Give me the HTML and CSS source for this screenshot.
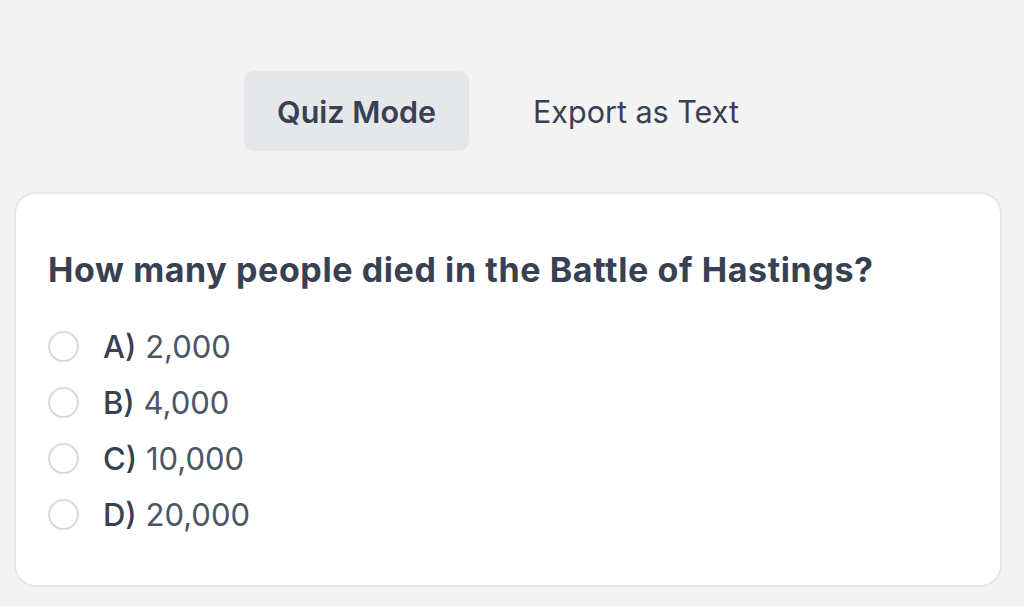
FILE: index.html
```html
<!DOCTYPE html>
<html>
<head>
<meta charset="utf-8">
<link rel="stylesheet" href="styles.css">
</head>
<body>
<div class="page">
  <nav class="tabs">
    <button class="tab active">Quiz Mode</button>
    <button class="tab">Export as Text</button>
  </nav>
  <section class="card">
    <h2 class="question">How many people died in the Battle of Hastings?</h2>
    <ul class="options">
      <li class="option"><span class="radio"></span><span class="label"><span class="key">A)</span> 2,000</span></li>
      <li class="option"><span class="radio"></span><span class="label"><span class="key">B)</span> 4,000</span></li>
      <li class="option"><span class="radio"></span><span class="label"><span class="key">C)</span> 10,000</span></li>
      <li class="option"><span class="radio"></span><span class="label"><span class="key">D)</span> 20,000</span></li>
    </ul>
  </section>
</div>
</body>
</html>
```

FILE: styles.css
```css
* { box-sizing: border-box; }
html, body { margin: 0; padding: 0; }
body {
  background: #f3f3f3;
  font-family: Inter, "Noto Sans", sans-serif;
  color: #374151;
  width: 1024px;
  height: 606px;
  overflow: hidden;
}
.page {
  padding: 71px 0 0 14px;
  width: 1002px;
}
.tabs {
  display: flex;
  justify-content: center;
  gap: 31px;
  margin-bottom: 41px;
}
.tab {
  font-family: inherit;
  font-size: 30.5px;
  color: #374151;
  background: transparent;
  border: none;
  height: 80px;
  padding: 0 33px;
  border-radius: 10px;
  font-weight: 400;
}
.tab.active {
  background: #e5e7eb;
  font-weight: 600;
}
.card {
  background: #fff;
  border: 2px solid #e5e7eb;
  border-radius: 22px;
  padding: 52px 32px 43px;
}
.question {
  margin: 0 0 24px;
  font-size: 34px;
  letter-spacing: 0.6px;
  line-height: 48px;
  font-weight: 700;
  color: #374151;
}
.options {
  list-style: none;
  margin: 0;
  padding: 0;
}
.option {
  display: flex;
  align-items: center;
  height: 56px;
  gap: 24px;
}
.radio {
  width: 31px;
  height: 31px;
  border: 2px solid #d7d9de;
  border-radius: 50%;
  flex: none;
}
.label {
  font-size: 31px;
  color: #4b5563;
}
.key {
  color: #374151;
  font-weight: 500;
}
```
